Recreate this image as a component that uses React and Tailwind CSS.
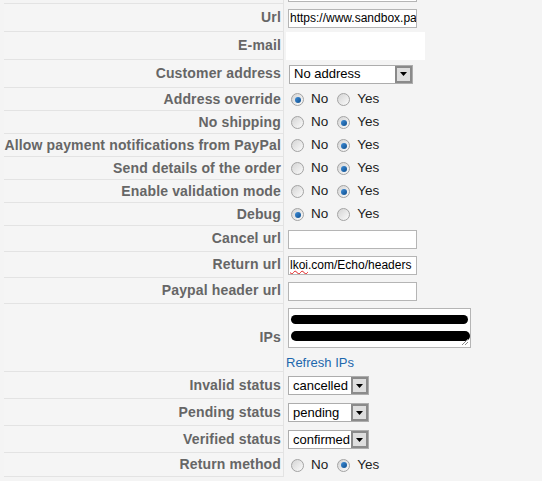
import React from 'react';

// Settings form rows: bold grey labels on the left, controls on the right
const font = { fontFamily: '"Liberation Sans", Arial, sans-serif' };

const Row = ({ label, h, children }) => (
  <div className={`flex ${h}`}>
    <div className="w-[280px] shrink-0 flex items-center justify-end pr-[2px] border-r border-b border-[#e3e3e3] bg-[#f5f5f5]">
      <span className="text-[14px] font-bold text-[#666] tracking-[0.15px] whitespace-nowrap">{label}</span>
    </div>
    <div className="flex-1 flex items-center pl-[4px]">{children}</div>
  </div>
);

const TextBox = ({ value = '', className = '' }) => (
  <div className={`w-[129px] h-[19px] border border-[#b5b5b5] bg-white overflow-hidden flex items-center pl-[1px] text-[12px] text-black whitespace-nowrap ${className}`}>
    {value}
  </div>
);

const Select = ({ value, width }) => (
  <div className={`${width} h-[19px] border border-[#adadad] bg-white flex items-center justify-between text-[13px] text-black`}>
    <span className="pl-[4px] whitespace-nowrap">{value}</span>
    <span className="w-[17px] h-[17px] border-2 border-[#8a8a8a] bg-[#dedede] flex items-center justify-center">
      <svg width="7" height="4" viewBox="0 0 7 4">
        <path d="M0 0h7L3.5 4z" fill="#000" />
      </svg>
    </span>
  </div>
);

const Radio = ({ checked }) => (
  <span className="w-[13px] h-[13px] rounded-full border border-[#a3a3a3] bg-gradient-to-br from-[#d4d4d4] to-[#fbfbfb] flex items-center justify-center">
    {checked && <span className="w-[6px] h-[6px] rounded-full bg-gradient-to-br from-[#3f8ed8] to-[#0d4f8f]" />}
  </span>
);

const YesNo = ({ yes }) => (
  <div className="flex items-center text-[13.5px] text-[#222] ml-[3px]">
    <Radio checked={!yes} />
    <span className="ml-[7px]">No</span>
    <span className="ml-[9px]"><Radio checked={yes} /></span>
    <span className="ml-[7px]">Yes</span>
  </div>
);

export default function App() {
  return (
    <div className="w-[542px] h-[481px] bg-[#f4f4f4] overflow-hidden pl-[4px]" style={font}>
      {/* tail of the previous row */}
      <div className="flex h-[4px]">
        <div className="w-[280px] shrink-0 border-r border-b border-[#e3e3e3]" />
        <div className="pl-[4px]">
          <div className="w-[129px] h-[2px] border-x border-b border-[#b5b5b5] bg-white" />
        </div>
      </div>

      <Row label="Url" h="h-[28px]">
        <TextBox value="https://www.sandbox.paypal.com/cgi-bin/webscr" />
      </Row>
      <Row label="E-mail" h="h-[28px]">
        <div className="-ml-[2px] w-[139px] h-[28px] bg-white" />
      </Row>
      <Row label="Customer address" h="h-[28px]">
        <div className="ml-[1px]"><Select value="No address" width="w-[124px]" /></div>
      </Row>
      <Row label="Address override" h="h-[23px]"><YesNo yes={false} /></Row>
      <Row label="No shipping" h="h-[23px]"><YesNo yes /></Row>
      <Row label="Allow payment notifications from PayPal" h="h-[23px]"><YesNo yes /></Row>
      <Row label="Send details of the order" h="h-[23px]"><YesNo yes /></Row>
      <Row label="Enable validation mode" h="h-[23px]"><YesNo yes /></Row>
      <Row label="Debug" h="h-[23px]"><YesNo yes={false} /></Row>
      <Row label="Cancel url" h="h-[26px]"><TextBox /></Row>
      <Row label="Return url" h="h-[26px]">
        <TextBox className="bg-[#fefee4]" value={
          <>
            <span className="underline decoration-wavy decoration-[#e02020] decoration-1 underline-offset-1">lkoi</span>.com/Echo/headers
          </>
        } />
      </Row>
      <Row label="Paypal header url" h="h-[26px]"><TextBox /></Row>

      <Row label="IPs" h="h-[68px]">
        <div className="flex flex-col -ml-[2px]">
          <div className="ml-[2px] relative w-[183px] h-[40px] border border-[#b5b5b5] bg-white px-[2px] pt-[6px] flex flex-col gap-[7px]">
            <div className="w-[177px] h-[9px] rounded-full bg-black" />
            <div className="w-[179px] h-[10px] rounded-full bg-black" />
            <svg className="absolute right-[1px] bottom-[1px]" width="8" height="8" viewBox="0 0 8 8">
              <path d="M7 1L1 7M7 4L4 7" stroke="#8a8a8a" strokeWidth="1" />
            </svg>
          </div>
          <span className="mt-[8px] text-[13px] text-[#1d67ad] leading-none">Refresh IPs</span>
        </div>
      </Row>

      <Row label="Invalid status" h="h-[27px]">
        <Select value="cancelled" width="w-[81px]" />
      </Row>
      <Row label="Pending status" h="h-[27px]">
        <Select value="pending" width="w-[81px]" />
      </Row>
      <Row label="Verified status" h="h-[27px]">
        <Select value="confirmed" width="w-[81px]" />
      </Row>
      <Row label="Return method" h="h-[24px]"><YesNo yes /></Row>
    </div>
  );
}
